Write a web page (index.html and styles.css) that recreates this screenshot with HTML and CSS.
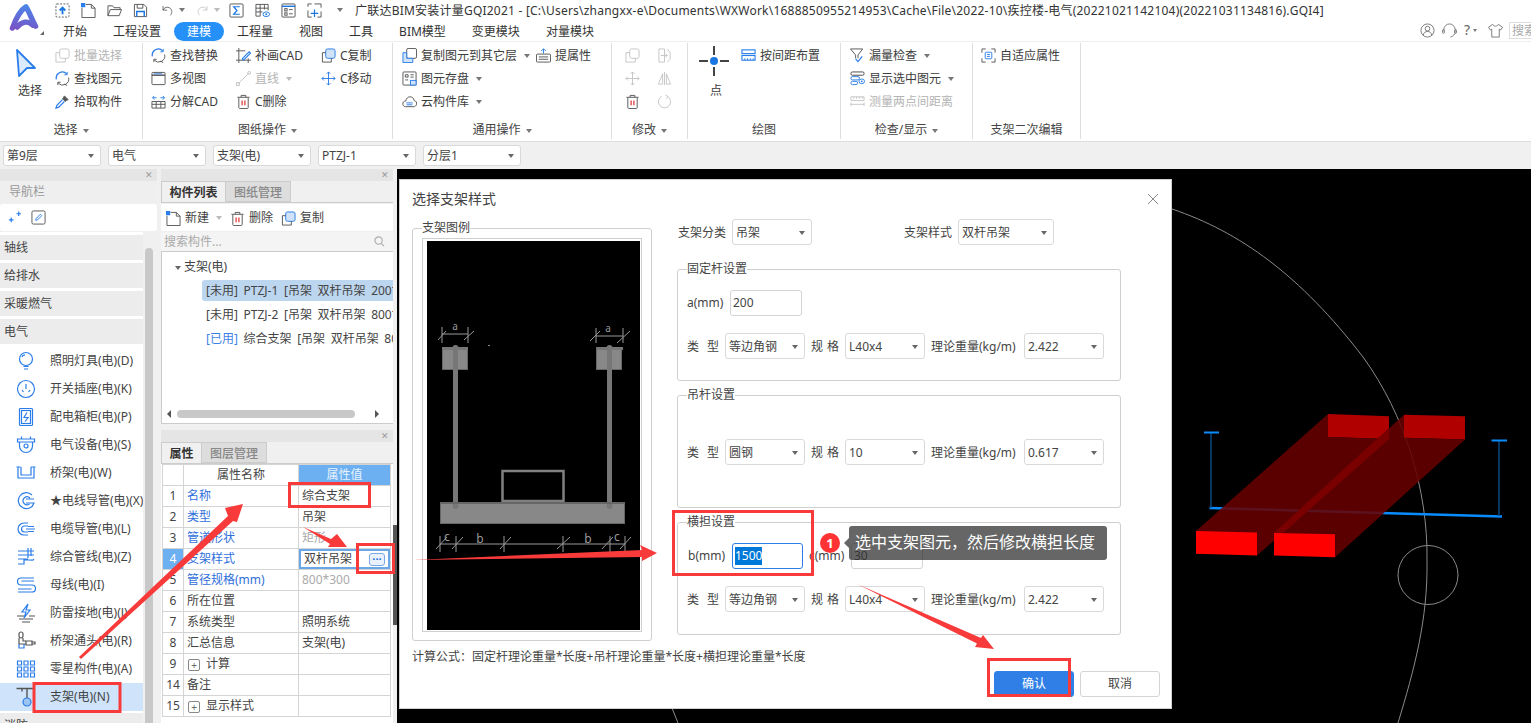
FILE: index.html
```html
<!DOCTYPE html>
<html lang="zh-CN">
<head>
<meta charset="utf-8">
<title>广联达BIM安装计量GQI2021</title>
<link rel="stylesheet" href="styles.css">
</head>
<body>
<svg class="defs" aria-hidden="true">
<defs>
<linearGradient id="lg" gradientUnits="userSpaceOnUse" x1="18" y1="2" x2="12" y2="30"><stop offset="0" stop-color="#4a86e8"/><stop offset="1" stop-color="#7b4fc4"/></linearGradient>
<symbol id="upload" viewBox="0 0 16 16"><rect x="1" y="1" width="14" height="14" rx="1" stroke-dasharray="2 1.5"/><path d="M8 12V5M5 8l3-3 3 3" stroke="#1976e0" stroke-width="2"/></symbol>
<symbol id="newdoc" viewBox="0 0 16 16"><path d="M5 1.500h6l4 4V15.500H1V5"/><path d="M11 1.500v4h4"/><rect x="0" y="0" width="4.500" height="4.500" fill="#2b7de9" stroke="none"/></symbol>
<symbol id="folder" viewBox="0 0 16 16"><path d="M1 13.500V3h5l1.500 2H14v2M1 13.500h12L15.500 7H3.500z"/></symbol>
<symbol id="save" viewBox="0 0 16 16"><path d="M1.500 1.500h10l3 3v10h-13z"/><path d="M4.500 1.500v4h6v-4"/><path d="M4 14.500V9h8v5.500" stroke="#1976e0" stroke-width="1.500"/></symbol>
<symbol id="undo" viewBox="0 0 16 16"><path d="M2.500 2.500v5h5"/><path d="M2.500 7.500C4 4 8 3 11 5c3 2.500 3 6 .5 9"/></symbol>
<symbol id="redo" viewBox="0 0 16 16"><path d="M13.500 2.500v5h-5"/><path d="M13.500 7.500C12 4 8 3 5 5c-3 2.500-3 6-.5 9"/></symbol>
<symbol id="sigma" viewBox="0 0 16 16"><rect x="1" y="1" width="14" height="14" rx="1"/><path d="M11.500 4H5l3.500 4L5 12h6.500" stroke="#1976e0" stroke-width="1.300"/></symbol>
<symbol id="gridEye" viewBox="0 0 16 16"><path d="M1 14V1.500h13V8M1 5.500h13M1 9.500h7M5.500 1.500V14H1M10 1.500V7"/><ellipse cx="12" cy="12" rx="3.500" ry="2.500" stroke="#1976e0"/><circle cx="12" cy="12" r="1" fill="#1976e0" stroke="none"/></symbol>
<symbol id="listp" viewBox="0 0 16 16"><rect x="1" y="1" width="14" height="14" rx="1"/><path d="M1 3.500h14" stroke="#1976e0" stroke-width="1.500"/><rect x="4" y="6" width="2.500" height="2.500"/><rect x="4" y="10.500" width="2.500" height="2.500"/><path d="M8.500 7h4M8.500 11.500h4"/></symbol>
<symbol id="dashPlus" viewBox="0 0 16 16"><path d="M1 4V1h4M8 1h7v4M15 9v6h-4M5 15H1V8"/><path d="M8 7v8M4 11h8" stroke="#1976e0" stroke-width="1.300"/></symbol>
<symbol id="cursor" viewBox="0 0 22 30"><path d="M2 2l18 18-8 0 -8 8z" fill="#dcebfb" stroke="#2b7de9" stroke-width="1.800" stroke-linejoin="round"/></symbol>
<symbol id="copyGray" viewBox="0 0 16 16"><rect x="5" y="1" width="10" height="10" rx="2"/><path d="M5 5H1v10h10v-4"/></symbol>
<symbol id="cycle" viewBox="0 0 16 16"><path d="M1.500 9a6.500 6.500 0 0 1 11-6" stroke="#2b7de9" stroke-width="1.300"/><path d="M14.500 7a6.500 6.500 0 0 1-11 6"/><path d="M13 1v3h-3" stroke="#2b7de9"/><path d="M3 15v-3h3M10 14l3 1.500"/></symbol>
<symbol id="dropper" viewBox="0 0 16 16"><path d="M10 2l4 4-2 1-1 1-3-3 1-1z" fill="#555"/><path d="M8 6L2 12l-1 3 3-1 6-6" stroke="#2b7de9" stroke-width="1.300"/></symbol>
<symbol id="windows" viewBox="0 0 16 16"><rect x="1" y="1.500" width="14" height="13" rx="1"/><path d="M1 4.500h14" stroke-width="1.500"/><path d="M3 3h9" stroke="#2b7de9"/></symbol>
<symbol id="explode" viewBox="0 0 16 16"><path d="M1 8v7h14V8zM5.500 8v7M10.500 8v7M1 11h14"/><path d="M2 4h4M10 4h4M3.500 2L1.500 4l2 2M12.500 2l2 2-2 2" stroke="#2b7de9"/></symbol>
<symbol id="cadDraw" viewBox="0 0 16 16"><path d="M3 0v16M13 11v5M0 3h10M0 13h16"/><path d="M7 11l7-7 1.500 1.500-7 7H7z" stroke="#2b7de9" stroke-width="1.200"/></symbol>
<symbol id="slash" viewBox="0 0 16 16"><path d="M2 14L14 2"/><rect x="0.500" y="12.500" width="3" height="3"/><circle cx="14" cy="2" r="1.500"/></symbol>
<symbol id="trash" viewBox="0 0 16 16"><path d="M3 4v10.500c0 .5.500 1 1 1h8c.5 0 1-.5 1-1V4M1.500 3.500h13M5.500 3.500v-2h5v2"/><path d="M6.500 7v5M9.500 7v5" stroke="#e02020" stroke-width="1.200"/></symbol>
<symbol id="copyBlue" viewBox="0 0 16 16"><rect x="5" y="1" width="10" height="10" rx="2" fill="#cfe2f8" stroke="#2b7de9"/><path d="M5 5H1.500v10h9.500v-4"/></symbol>
<symbol id="move" viewBox="0 0 16 16" ><path d="M8 1v14M1 8h14M6 3l2-2 2 2M6 13l2 2 2-2M3 6L1 8l2 2M13 6l2 2-2 2" stroke="#2b7de9"/></symbol>
<symbol id="moveGray" viewBox="0 0 16 16"><path d="M8 1v14M1 8h14M6 3l2-2 2 2M6 13l2 2 2-2M3 6L1 8l2 2M13 6l2 2-2 2"/></symbol>
<symbol id="copyLayer" viewBox="0 0 16 16"><rect x="5" y="0.500" width="10.500" height="10.500" rx="1.500"/><path d="M5 5H1v10.500h10.500V11H5z" fill="#cfe2f8" stroke="#2b7de9"/></symbol>
<symbol id="store" viewBox="0 0 16 16"><rect x="1" y="1" width="14" height="14" rx="1"/><path d="M3.500 4h3v2.500h-3zM3.500 9.500h3M9 4h3.500M9 6.500h3.500"/><rect x="9" y="10" width="6" height="5" fill="#cfe2f8" stroke="#2b7de9"/></symbol>
<symbol id="cloud" viewBox="0 0 16 16"><path d="M4 13.500C1.500 13.500 0.500 11.500 1 9.500 1.500 8 2.500 7.500 4 7.500 4.500 4.500 6.500 3 8.500 3c2.500 0 4 1.500 4.500 4 2 .5 3 2 2.500 4-.3 1.500-1.500 2.500-3 2.500z"/><path d="M4.500 9.500h7M5 11.500h6" stroke="#2b7de9"/></symbol>
<symbol id="extract" viewBox="0 0 16 16"><rect x="0.500" y="6.500" width="15" height="8.500" rx="1"/><path d="M3 9.500h10M3 12h10"/><path d="M8 6V1M5.500 3L8 1l2.500 2" stroke="#2b7de9"/></symbol>
<symbol id="mirrorDoc" viewBox="0 0 16 16"><path d="M2 1h6v14H2zM11 1l3 4v7l-3 3"/><path d="M4 8h7M9 6l2 2-2 2"/></symbol>
<symbol id="mirror" viewBox="0 0 16 16"><path d="M8 1v14M6 3L1.500 14H6zM10 3l4.500 11H10z"/></symbol>
<symbol id="rotate" viewBox="0 0 16 16"><path d="M11 2.500a6.500 6.500 0 1 1-6 0"/><path d="M9 1l2.500 1.500L10 5"/></symbol>
<symbol id="point" viewBox="0 0 30 30"><path d="M15 0v9M15 21v9M0 15h9M21 15h9" stroke="#444" stroke-width="2"/><circle cx="15" cy="15" r="4" fill="#1976e0" stroke="none"/></symbol>
<symbol id="spacing" viewBox="0 0 16 16"><rect x="1" y="2" width="14" height="4" stroke="#2b7de9" stroke-width="1.200"/><rect x="1" y="8" width="14" height="5" stroke="#2b7de9" stroke-width="1.200"/><path d="M4 11v2M7 11v2M10 11v2M13 11v2" stroke="#2b7de9"/></symbol>
<symbol id="filter" viewBox="0 0 16 16"><path d="M0.500 1h13L8.500 7.500V11M6 11V7.500L.5 1"/><path d="M6 11.500l2.500 3L13 9" stroke="#2b7de9" stroke-width="1.300"/></symbol>
<symbol id="showSel" viewBox="0 0 16 16"><rect x="1" y="1" width="14" height="3.500" rx="1.500" stroke="#444"/><rect x="1" y="6" width="9" height="3.500" rx="1.500" stroke="#2b7de9"/><rect x="1" y="11" width="7" height="3.500" rx="1.500" stroke="#2b7de9"/><ellipse cx="12.500" cy="11" rx="3" ry="2.500" stroke="#2b7de9"/><circle cx="12.500" cy="11" r="1" fill="#2b7de9" stroke="none"/></symbol>
<symbol id="measure" viewBox="0 0 16 16"><path d="M1 3h14v4H1zM1 11h14M1 9v4M15 9v4M4 3v2M7 3v2M10 3v2M13 3v2"/></symbol>
<symbol id="adapt" viewBox="0 0 16 16"><path d="M1 5V1h4M11 1h4v4M15 11v4h-4M5 15H1v-4"/><rect x="4.500" y="4.500" width="7" height="7" rx="1" stroke="#2b7de9"/><path d="M6.500 7h3M6.500 9h3" stroke="#2b7de9"/></symbol>
<symbol id="user" viewBox="0 0 16 16"><circle cx="8" cy="8" r="7"/><circle cx="8" cy="6" r="2.500"/><path d="M3.500 13c.5-3 2.500-4 4.500-4s4 1 4.500 4"/></symbol>
<symbol id="headset" viewBox="0 0 16 16"><path d="M2 9V7a6 6 0 0 1 12 0v2c0 3-2 5.500-5 6"/><rect x="0.500" y="7" width="2" height="4" rx="1"/><rect x="13.500" y="7" width="2" height="4" rx="1"/></symbol>
<symbol id="shirt" viewBox="0 0 16 16"><path d="M5 1.500L0.500 4.500 2.500 7.500 4 6.500V15h8V6.500l1.500 1 2-3L11 1.500C10 4 6 4 5 1.500z"/></symbol>
<symbol id="sparks" viewBox="0 0 16 16"><path d="M2 10.500h5M4.500 8v5M10 4h5M12.500 1.500v5" stroke="#2b7de9" stroke-width="1.300"/></symbol>
<symbol id="pencilBox" viewBox="0 0 16 16"><rect x="1" y="1" width="14" height="14" rx="1.500"/><path d="M5 11l.5-2L10 4.500l1.500 1.500L7 10.500z" stroke="#2b7de9"/></symbol>
<symbol id="mag" viewBox="0 0 12 12"><circle cx="5" cy="5" r="4"/><path d="M8 8l3 3"/></symbol>
<symbol id="bulb" viewBox="0 0 20 20"><circle cx="10" cy="8" r="6.500"/><path d="M7.500 15.500h5M8 18h4M6 6c.5-1.500 1.500-2 3-2.200"/></symbol>
<symbol id="socket" viewBox="0 0 20 20"><circle cx="10" cy="10" r="8.500"/><path d="M10 5v5M6 11l1.500 2M14 11l-1.500 2"/></symbol>
<symbol id="cabinet" viewBox="0 0 20 20"><rect x="3.500" y="1.500" width="13" height="17" rx="1"/><rect x="5.500" y="3.500" width="9" height="13"/><path d="M11 5.500L8 10.500h4L9 14.500"/></symbol>
<symbol id="device" viewBox="0 0 20 20"><path d="M1.500 4h17v3h-17zM3.500 7v4a6.500 6.500 0 0 0 13 0V7M5.500 4V1.500M14.500 4V1.500"/><circle cx="10" cy="11" r="2"/></symbol>
<symbol id="tray" viewBox="0 0 20 20"><path d="M2 4v11h16V4M5 4v8h10V4"/><path d="M0.500 4h4M15 4h4.500"/></symbol>
<symbol id="conduit" viewBox="0 0 20 20"><path d="M16 4a8 8 0 1 0 2 8H10"/><path d="M14 7a4 4 0 1 0-.5 6M10 8h8"/></symbol>
<symbol id="cable" viewBox="0 0 20 20"><path d="M12 4H8a6 6 0 0 0 0 12h4"/><path d="M12 7H8.500a3 3 0 0 0 0 6H12"/><path d="M10 10h9M12 7.500h6M12 12.500h6"/></symbol>
<symbol id="combo" viewBox="0 0 20 20"><path d="M2 4h16M2 8h16M12 1v10M15 1v8M2 12h10M2 17h6v-4h6c2 0 3 1 4-1"/></symbol>
<symbol id="busbar" viewBox="0 0 20 20"><path d="M18 3H5a3 3 0 0 0 0 7h11a3 3 0 0 1 0 7H2"/><path d="M18 6H5.500M2 14h13.500"/></symbol>
<symbol id="bolt" viewBox="0 0 20 20"><path d="M12 1L6 9h4l-2 6 6-8h-4z"/><path d="M1 13h7M13 13h6" stroke="#555"/><path d="M3 16h14M6 19h8" stroke="#555"/></symbol>
<symbol id="fitting" viewBox="0 0 20 20"><rect x="3" y="1" width="4" height="6" rx="2" stroke="#555"/><path d="M3 7v6h7M7 7v3h3" stroke="#555"/><path d="M10 10h6v4h-6zM16 11h3v2h-3z" stroke="#555"/><path d="M3 13v4h5v-4" stroke="#2b7de9"/></symbol>
<symbol id="dots9" viewBox="0 0 20 20"><path d="M1.500 2h4v4h-4zM8 2h4v4H8zM14.500 2h4v4h-4zM1.500 8h4v4h-4zM8 8h4v4H8zM14.500 8h4v4h-4zM1.500 14h4v4h-4zM8 14h4v4H8zM14.500 14h4v4h-4z"/></symbol>
<symbol id="bracket" viewBox="0 0 20 20"><path d="M0.500 1.500h18M6 1.500v3M11 2v10" stroke="#555" stroke-width="1.400"/><circle cx="11" cy="15" r="4" fill="#9cc4f2" stroke="#2b7de9"/></symbol>
</defs>
</svg>

<div class="app">
  <header class="top">
    <div class="logo-cell">
      <svg class="logo" viewBox="0 0 32 30"><path d="M4 26C8 15 13 7 18 4c3 4 6 13 10 20M9 25c5-6 11-7 16-2" fill="none" stroke="url(#lg)" stroke-width="5.500" stroke-linecap="round" stroke-linejoin="round"/></svg>
      <i class="corner"></i>
    </div>
    <div class="top-main">
      <div class="title-row">
        <svg class="i qa"><use href="#upload"/></svg>
        <svg class="i qa"><use href="#newdoc"/></svg>
        <svg class="i qa"><use href="#folder"/></svg>
        <svg class="i qa"><use href="#save"/></svg>
        <svg class="i qa-s"><use href="#undo"/></svg><i class="caret qa-c"></i>
        <svg class="i qa-s off"><use href="#redo"/></svg><i class="caret qa-c lt"></i>
        <svg class="i qa"><use href="#sigma"/></svg>
        <svg class="i qa"><use href="#gridEye"/></svg>
        <svg class="i qa"><use href="#listp"/></svg>
        <svg class="i qa"><use href="#dashPlus"/></svg>
        <i class="caret qa-last"></i>
        <span class="win-title">广联达BIM安装计量GQI2021 - [C:\Users\zhangxx-e\Documents\WXWork\1688850955214953\Cache\File\2022-10\疾控楼-电气(20221021142104)(20221031134816).GQI4]</span>
      </div>
      <div class="tab-row">
        <nav class="tabs">
          <span class="tab">开始</span><span class="tab">工程设置</span><span class="tab on">建模</span><span class="tab">工程量</span><span class="tab">视图</span><span class="tab">工具</span><span class="tab">BIM模型</span><span class="tab">变更模块</span><span class="tab">对量模块</span>
        </nav>
        <div class="sys">
          <svg class="i sys-i"><use href="#user"/></svg>
          <svg class="i sys-i"><use href="#headset"/></svg>
          <span class="help">?</span><i class="caret mini"></i>
          <svg class="i sys-i"><use href="#shirt"/></svg>
          <span class="search-mini">搜索</span>
        </div>
      </div>
    </div>
  </header>

  <section class="ribbon">
    <div class="group g1">
      <div class="g-body">
        <div class="big"><svg class="i cursor"><use href="#cursor"/></svg><span>选择</span></div>
        <div class="col">
          <div class="it dis"><svg class="i off"><use href="#copyGray"/></svg>批量选择</div>
          <div class="it"><svg class="i"><use href="#cycle"/></svg>查找图元</div>
          <div class="it"><svg class="i"><use href="#dropper"/></svg>拾取构件</div>
        </div>
      </div>
      <div class="g-label">选择<i class="caret"></i></div>
    </div>
    <div class="group g2">
      <div class="g-body">
        <div class="col w85">
          <div class="it"><svg class="i"><use href="#cycle"/></svg>查找替换</div>
          <div class="it"><svg class="i"><use href="#windows"/></svg>多视图</div>
          <div class="it"><svg class="i"><use href="#explode"/></svg>分解CAD</div>
        </div>
        <div class="col w85">
          <div class="it"><svg class="i"><use href="#cadDraw"/></svg>补画CAD</div>
          <div class="it dis"><svg class="i off"><use href="#slash"/></svg>直线<i class="caret lt"></i></div>
          <div class="it"><svg class="i"><use href="#trash"/></svg>C删除</div>
        </div>
        <div class="col">
          <div class="it"><svg class="i"><use href="#copyBlue"/></svg>C复制</div>
          <div class="it"><svg class="i"><use href="#move"/></svg>C移动</div>
        </div>
      </div>
      <div class="g-label">图纸操作<i class="caret"></i></div>
    </div>
    <div class="group g3">
      <div class="g-body">
        <div class="col w134">
          <div class="it"><svg class="i"><use href="#copyLayer"/></svg>复制图元到其它层<i class="caret"></i></div>
          <div class="it"><svg class="i"><use href="#store"/></svg>图元存盘<i class="caret"></i></div>
          <div class="it"><svg class="i"><use href="#cloud"/></svg>云构件库<i class="caret"></i></div>
        </div>
        <div class="col">
          <div class="it"><svg class="i"><use href="#extract"/></svg>提属性</div>
        </div>
      </div>
      <div class="g-label">通用操作<i class="caret"></i></div>
    </div>
    <div class="group g4">
      <div class="g-body">
        <div class="col w32">
          <div class="it"><svg class="i off"><use href="#copyGray"/></svg></div>
          <div class="it"><svg class="i off"><use href="#moveGray"/></svg></div>
          <div class="it"><svg class="i"><use href="#trash"/></svg></div>
        </div>
        <div class="col">
          <div class="it"><svg class="i off"><use href="#mirrorDoc"/></svg></div>
          <div class="it"><svg class="i off"><use href="#mirror"/></svg></div>
          <div class="it"><svg class="i off"><use href="#rotate"/></svg></div>
        </div>
      </div>
      <div class="g-label">修改<i class="caret"></i></div>
    </div>
    <div class="group g5">
      <div class="g-body">
        <div class="big pt"><svg class="i point"><use href="#point"/></svg><span>点</span></div>
        <div class="col">
          <div class="it"><svg class="i"><use href="#spacing"/></svg>按间距布置</div>
        </div>
      </div>
      <div class="g-label">绘图</div>
    </div>
    <div class="group g6">
      <div class="g-body">
        <div class="col">
          <div class="it"><svg class="i"><use href="#filter"/></svg>漏量检查<i class="caret"></i></div>
          <div class="it"><svg class="i"><use href="#showSel"/></svg>显示选中图元<i class="caret"></i></div>
          <div class="it dis"><svg class="i off"><use href="#measure"/></svg>测量两点间距离</div>
        </div>
      </div>
      <div class="g-label">检查/显示<i class="caret"></i></div>
    </div>
    <div class="group g7">
      <div class="g-body">
        <div class="col">
          <div class="it"><svg class="i"><use href="#adapt"/></svg>自适应属性</div>
        </div>
      </div>
      <div class="g-label">支架二次编辑</div>
    </div>
  </section>

  <section class="selbar">
    <div class="sel s98"><span>第9层</span><i class="caret"></i></div>
    <div class="sel s98"><span>电气</span><i class="caret"></i></div>
    <div class="sel s98"><span>支架(电)</span><i class="caret"></i></div>
    <div class="sel s98"><span>PTZJ-1</span><i class="caret"></i></div>
    <div class="sel s98"><span>分层1</span><i class="caret"></i></div>
  </section>

  <main class="work">
    <aside class="nav">
      <div class="pbar"><span class="x">✕</span></div>
      <div class="nav-title">导航栏</div>
      <div class="nav-tools">
        <svg class="i"><use href="#sparks"/></svg>
        <svg class="i"><use href="#pencilBox"/></svg>
      </div>
      <div class="nav-wrap">
        <div class="nav-list">
          <div class="cat">轴线</div>
          <div class="cat">给排水</div>
          <div class="cat">采暖燃气</div>
          <div class="cat">电气</div>
          <div class="ni"><svg class="nic"><use href="#bulb"/></svg>照明灯具(电)(D)</div>
          <div class="ni"><svg class="nic"><use href="#socket"/></svg>开关插座(电)(K)</div>
          <div class="ni"><svg class="nic"><use href="#cabinet"/></svg>配电箱柜(电)(P)</div>
          <div class="ni"><svg class="nic"><use href="#device"/></svg>电气设备(电)(S)</div>
          <div class="ni"><svg class="nic"><use href="#tray"/></svg>桥架(电)(W)</div>
          <div class="ni"><svg class="nic"><use href="#conduit"/></svg>★电线导管(电)(X)</div>
          <div class="ni"><svg class="nic"><use href="#cable"/></svg>电缆导管(电)(L)</div>
          <div class="ni"><svg class="nic"><use href="#combo"/></svg>综合管线(电)(Z)</div>
          <div class="ni"><svg class="nic"><use href="#busbar"/></svg>母线(电)(I)</div>
          <div class="ni"><svg class="nic"><use href="#bolt"/></svg>防雷接地(电)(J)</div>
          <div class="ni"><svg class="nic"><use href="#fitting"/></svg>桥架通头(电)(R)</div>
          <div class="ni"><svg class="nic"><use href="#dots9"/></svg>零星构件(电)(A)</div>
          <div class="ni cur"><svg class="nic"><use href="#bracket"/></svg>支架(电)(N)</div>
          <div class="cat last">消防</div>
        </div>
        <div class="nav-track"><div class="nav-thumb"></div></div>
      </div>
    </aside>

    <section class="mid">
      <div class="pbar"><span class="x">✕</span></div>
      <div class="mtabs"><span class="mtab on">构件列表</span><span class="mtab">图纸管理</span></div>
      <div class="mtools">
        <svg class="i"><use href="#newdoc"/></svg><span>新建</span><i class="caret lt"></i>
        <svg class="i mt-g"><use href="#trash"/></svg><span>删除</span>
        <svg class="i mt-g"><use href="#copyBlue"/></svg><span>复制</span>
      </div>
      <div class="msearch"><span>搜索构件...</span><svg class="mag"><use href="#mag"/></svg></div>
      <div class="tree">
        <div class="tn"><i class="caret tc"></i>支架(电)</div>
        <div class="tl sel-row">[未用] PTZJ-1 [吊架 双杆吊架 200*100]</div>
        <div class="tl">[未用] PTZJ-2 [吊架 双杆吊架 800*300]</div>
        <div class="tl"><span class="used">[已用]</span> 综合支架 [吊架 双杆吊架 800*300]</div>
        <div class="hscroll"><i class="arr l"></i><div class="hthumb"></div><i class="arr r"></i></div>
      </div>
      <div class="pgap"></div>
      <div class="pbar"><span class="x">✕</span></div>
      <div class="mtabs"><span class="mtab on t2">属性</span><span class="mtab">图层管理</span></div>
      <div class="pwrap">
      <table class="props">
        <colgroup><col class="c1"><col class="c2"><col class="c3"></colgroup>
        <tr class="hd"><th></th><th>属性名称</th><th class="pv">属性值</th></tr>
        <tr><td class="n">1</td><td class="bl">名称</td><td>综合支架</td></tr>
        <tr><td class="n">2</td><td class="bl">类型</td><td>吊架</td></tr>
        <tr><td class="n">3</td><td class="bl">管道形状</td><td class="gy">矩形</td></tr>
        <tr><td class="n act">4</td><td class="bl">支架样式</td><td class="edit"><div class="edit-in"><span>双杆吊架</span><span class="more">···</span></div></td></tr>
        <tr><td class="n">5</td><td class="bl">管径规格(mm)</td><td class="gy">800*300</td></tr>
        <tr><td class="n">6</td><td>所在位置</td><td></td></tr>
        <tr><td class="n">7</td><td>系统类型</td><td>照明系统</td></tr>
        <tr><td class="n">8</td><td>汇总信息</td><td>支架(电)</td></tr>
        <tr><td class="n">9</td><td><span class="pm">+</span>计算</td><td></td></tr>
        <tr><td class="n">14</td><td>备注</td><td></td></tr>
        <tr><td class="n">15</td><td><span class="pm">+</span>显示样式</td><td></td></tr>
      </table>
      </div>
    </section>

    <div class="split"><div class="split-thumb"></div></div>

    <section class="canvas">
      <svg class="scene" viewBox="397 169 1134 554">
        <path class="arc" d="M1172 209C1240 232 1300 275 1363 357C1405 415 1428 490 1427 560C1428 620 1414 670 1398 723"/>
        <path class="arc" d="M672 708L678 723"/>
        <ellipse class="arc" cx="1428" cy="575" rx="30" ry="29.500"/>
        <path class="bb" d="M1209.500 508L1502 516.500"/>
        <path class="bv" d="M1211 433V508M1499 441V516"/>
        <path class="bc" d="M1204 432.500H1219M1491.500 440.500H1507"/>
        <polygon fill="#b00000" points="1328,414 1389,416.200 1389,439 1328,437"/>
        <polygon fill="#b00000" points="1404,414.800 1465,416.200 1465,439.500 1404,437.700"/>
        <polygon class="rb" points="1196,531 1328,414 1328,437 1389,439 1257,555.500"/>
        <polygon class="rb" points="1274,533 1404,414.800 1404,437.700 1465,439.500 1335,557.300"/>
        <polygon fill="#7a0000" points="1274,533 1389,428 1389,439 1274,541"/>
        <polygon fill="#ff0000" points="1196,531 1257,532.600 1257,555.500 1196,553.700"/>
        <polygon fill="#ff0000" points="1274,533 1335,534.300 1335,557.300 1274,555.500"/>
      </svg>
    </section>
  </main>

  <div class="dialog" role="dialog">
    <div class="d-head"><span>选择支架样式</span>
      <svg class="d-close" viewBox="0 0 12 12"><path d="M1 1l10 10M11 1L1 11"/></svg>
    </div>
    <div class="d-body">
      <fieldset class="fs legend-box">
        <legend>支架图例</legend>
        <div class="frame">
          <svg class="draw" viewBox="427 241 213 389">
            <rect x="427" y="241" width="213" height="389" fill="#000"/>
            <g fill="#888" stroke="#666">
              <rect x="442.500" y="347.500" width="25" height="22"/>
              <rect x="596.500" y="347.500" width="25" height="22"/>
              <rect x="440.500" y="502.500" width="184" height="21"/>
            </g>
            <g fill="#777">
              <rect x="453" y="346" width="5" height="160"/>
              <rect x="607" y="346" width="5" height="160"/>
              <circle cx="455.500" cy="348" r="3"/>
              <circle cx="609.500" cy="348" r="3"/>
              <rect x="442" y="347" width="26" height="3"/>
              <rect x="597" y="347" width="26" height="3"/>
              <circle cx="455.500" cy="506" r="3"/>
              <circle cx="609.500" cy="506" r="3"/>
            </g>
            <rect x="502.500" y="471" width="61" height="30" fill="none" stroke="#808080" stroke-width="2.500"/>
            <path d="M441 503H625" stroke="#666" stroke-width="2"/>
            <g stroke="#999" stroke-width="1" fill="none">
              <path d="M442 334H468M442 327V343M468 327V343M438 340L446 331M464 340L474 331"/>
              <path d="M596 336H623M596 328V343M623 328V343M590 341L600 331M617 343L630 331"/>
              <path d="M440 544H625M440 536V552M456 536V552M504 536V552M563 536V552M610 536V552M625 536V552"/>
              <path d="M436 549L447 537M452 549L463 537M500 549L511 537M557 549L570 537M602 549L613 537M620 549L631 537"/>
            </g>
            <g class="dim-t">
              <text x="455" y="330" text-anchor="middle">a</text>
              <text x="608" y="332" text-anchor="middle">a</text>
              <text x="447" y="541" class="big-d" text-anchor="middle">c</text>
              <text x="480" y="543" class="big-d" text-anchor="middle">b</text>
              <text x="588" y="543" class="big-d" text-anchor="middle">b</text>
              <text x="617" y="541" class="big-d" text-anchor="middle">c</text>
            </g>
            <rect x="488" y="345" width="2" height="1" fill="#888"/>
          </svg>
        </div>
      </fieldset>
      <div class="d-right">
        <div class="d-top">
          <span class="lb">支架分类</span>
          <div class="sel s80"><span>吊架</span><i class="caret"></i></div>
          <span class="lb lb-gap">支架样式</span>
          <div class="sel s96"><span>双杆吊架</span><i class="caret"></i></div>
        </div>
        <fieldset class="fs f1">
          <legend>固定杆设置</legend>
          <div class="frow r1"><span class="lb w36">a(mm)</span><div class="inp">200</div></div>
          <div class="frow r2">
            <span class="lb2"><span>类</span><span>型</span></span>
            <div class="sel s80"><span>等边角钢</span><i class="caret"></i></div>
            <span class="lb3"><span>规</span><span>格</span></span>
            <div class="sel s80"><span>L40x4</span><i class="caret"></i></div>
            <span class="lb w87">理论重量(kg/m)</span>
            <div class="sel s80"><span>2.422</span><i class="caret"></i></div>
          </div>
        </fieldset>
        <fieldset class="fs f2">
          <legend>吊杆设置</legend>
          <div class="frow r2 far">
            <span class="lb2"><span>类</span><span>型</span></span>
            <div class="sel s80"><span>圆钢</span><i class="caret"></i></div>
            <span class="lb3"><span>规</span><span>格</span></span>
            <div class="sel s80"><span>10</span><i class="caret"></i></div>
            <span class="lb w87">理论重量(kg/m)</span>
            <div class="sel s80"><span>0.617</span><i class="caret"></i></div>
          </div>
        </fieldset>
        <fieldset class="fs f2">
          <legend>横担设置</legend>
          <div class="frow r1">
            <span class="lb w36 b-lb">b(mm)</span><div class="inp focus"><span class="hl">1500</span></div>
            <span class="lb w36c">c(mm)</span><div class="inp">30</div>
          </div>
          <div class="frow r2">
            <span class="lb2"><span>类</span><span>型</span></span>
            <div class="sel s80"><span>等边角钢</span><i class="caret"></i></div>
            <span class="lb3"><span>规</span><span>格</span></span>
            <div class="sel s80"><span>L40x4</span><i class="caret"></i></div>
            <span class="lb w87">理论重量(kg/m)</span>
            <div class="sel s80"><span>2.422</span><i class="caret"></i></div>
          </div>
        </fieldset>
      </div>
    </div>
    <div class="formula">计算公式：固定杆理论重量*长度+吊杆理论重量*长度+横担理论重量*长度</div>
    <div class="d-btns"><span class="btn pri">确认</span><span class="btn">取消</span></div>
  </div>

  <svg class="marks" viewBox="0 0 1531 723">
    <g class="box">
      <rect x="34" y="683.500" width="86" height="28"/>
      <rect x="289.500" y="483.500" width="80" height="23"/>
      <rect x="357.500" y="544.500" width="36" height="28"/>
      <rect x="673.500" y="511.500" width="139" height="63"/>
      <rect x="988.500" y="659.500" width="81" height="36"/>
    </g>
    <g fill="#f93a3a">
      <polygon points="79,657 228,516 225,508 243,504 237,522 233,521 81,659"/>
      <polygon points="303,527 331,539 337,534 347,547 328,547 330,544"/>
      <polygon points="413,560 642,550 640,545 657,553 642,561 642,557"/>
      <polygon points="857,584 981,638 983,635 994,649 975,647 977,643.500"/>
    </g>
  </svg>

  <div class="tip">
    <span class="tip-n">1</span>
    <span class="tip-b">选中支架图元，然后修改横担长度</span>
  </div>
</div>
</body>
</html>
```
FILE: styles.css
```css
* { box-sizing: border-box; }
html, body { margin: 0; padding: 0; }
body { overflow: hidden; font: 12px/16px "Noto Sans", "Noto Sans CJK SC", sans-serif; color: #3c3c3c; background: #f0f0f0; }
.defs { display: block; width: 0; height: 0; position: absolute; }
i { font-style: normal; }
.app { position: relative; width: 1531px; height: 723px; overflow: hidden; display: flex; flex-direction: column; }

.i { width: 15px; height: 15px; flex: none; fill: none; stroke: #555; stroke-width: 1; }
.off { stroke: #c4c4c4; }
.caret { display: inline-block; width: 0; height: 0; border: 3px solid transparent; border-top: 4px solid #777; border-bottom: 0; margin-left: 6px; flex: none; vertical-align: middle; }
.caret.lt { border-top-color: #bbb; }

/* header */
.top { height: 41px; background: #fff; display: flex; flex: none; }
.logo-cell { width: 50px; display: flex; align-items: flex-start; padding: 3px 0 0 8px; flex: none; }
.logo { width: 32px; height: 29px; }
.corner { width: 0; height: 0; border-left: 4px solid transparent; border-bottom: 4px solid #666; margin-top: 28px; }
.top-main { flex: 1; min-width: 0; }
.title-row { height: 22px; display: flex; align-items: center; padding-left: 5px; white-space: nowrap; }
.qa { margin: 0 11px 2px 0; }
.qa-s { width: 13px; height: 13px; margin: 0 0 2px 2px; }
.qa-c { margin: 0 9px 2px 5px; }
.qa-last { margin: 0 12px 2px 4px; }
.win-title { font-size: 12px; color: #333; letter-spacing: .22px; }
.tab-row { height: 19px; display: flex; justify-content: space-between; }
.tabs { display: flex; }
.tab { padding: 0 13px; line-height: 19px; font-size: 12px; color: #333; border-radius: 10px; white-space: nowrap; }
.tab.on { background: #2490f8; color: #fff; }
.sys { display: flex; align-items: center; gap: 7px; padding-bottom: 3px; }
.sys-i { stroke: #777; }
.help { font-size: 14px; color: #666; }
.caret.mini { margin: 0 4px 0 -4px; border-width: 2px; border-top: 3px solid #777; border-bottom: 0; }
.search-mini { width: 22px; height: 17px; border: 1px solid #ddd; border-right: 0; color: #aaa; font-size: 12px; line-height: 15px; padding-left: 2px; overflow: hidden; white-space: nowrap; margin-left: -1px; }

/* ribbon */
.ribbon { height: 101px; background: #fff; border-top: 1px solid #eee; border-bottom: 1px solid #ddd; display: flex; flex: none; }
.group { height: 96px; margin-top: 1px; border-right: 1px solid #ddd; display: flex; flex-direction: column; flex: none; }
.g-body { height: 77px; display: flex; padding-top: 1px; }
.g-label { height: 19px; line-height: 20px; text-align: center; color: #444; white-space: nowrap; }
.g-label .caret { margin-left: 5px; }
.g1 { width: 143px; } .g1 .g-body { padding-left: 12px; gap: 7px; }
.g2 { width: 250px; } .g2 .g-body { padding-left: 8px; }
.g3 { width: 219px; } .g3 .g-body { padding-left: 9px; }
.g4 { width: 76px; }  .g4 .g-body { padding-left: 13px; }
.g5 { width: 153px; } .g5 .g-body { padding-left: 11px; gap: 12px; }
.g6 { width: 132px; } .g6 .g-body { padding-left: 9px; }
.g7 { width: 108px; } .g7 .g-body { padding-left: 8px; }
.col { display: flex; flex-direction: column; }
.w85 { width: 85px; } .w134 { width: 134px; } .w32 { width: 32px; }
.it { height: 23px; display: flex; align-items: center; gap: 4px; white-space: nowrap; color: #3c3c3c; }
.it.dis { color: #b4b4b4; }
.it .caret { margin-left: 3px; }
.big { width: 36px; display: flex; flex-direction: column; align-items: center; }
.cursor { width: 22px; height: 30px; margin: 4px 9px 5px 0; }
.big span { line-height: 16px; }
.big.pt { width: 30px; }
.big.pt span { padding-left: 4px; }
.point { width: 30px; height: 30px; margin-top: 2px; margin-bottom: 7px; stroke: none; }

/* selector bar */
.selbar { height: 27px; display: flex; align-items: center; gap: 7px; padding-left: 3px; flex: none; }
.sel { height: 21px; background: #fff; border: 1px solid #d9d9d9; border-radius: 3px; display: flex; align-items: center; justify-content: space-between; padding: 0 6px 0 3px; color: #444; white-space: nowrap; flex: none; }
.sel .caret { margin-left: 0; border-top-color: #666; }
.s98 { width: 98px; }
.s80 { width: 80px; height: 26px; }
.s96 { width: 96px; height: 26px; }

/* work */
.work { flex: 1; min-height: 0; display: flex; }
.pbar { height: 12px; background: #e5e5e5; display: flex; justify-content: flex-end; align-items: center; padding-right: 4px; flex: none; }
.x { font-size: 9px; color: #999; line-height: 12px; }

.nav { width: 157px; display: flex; flex-direction: column; flex: none; }
.nav-title { height: 22px; background: #efefef; color: #999; line-height: 22px; padding-left: 9px; }
.nav-tools { height: 27px; background: #fff; margin-top: 1px; display: flex; align-items: center; gap: 9px; padding-left: 7px; border-radius: 3px; }
.nav-wrap { flex: 1; min-height: 0; margin-top: 1px; display: flex; background: #fff; }
.nav-list { width: 143px; padding-top: 3px; overflow: hidden; flex: none; }
.cat { height: 25px; line-height: 25px; margin-bottom: 3px; background: #ececec; padding-left: 4px; color: #444; }
.cat.last { margin: 2px 0 0; }
.ni { height: 28px; display: flex; align-items: center; gap: 14px; padding-left: 16px; white-space: nowrap; overflow: hidden; color: #444; }
.nic { width: 20px; height: 20px; flex: none; fill: none; stroke: #2b7de9; stroke-width: 1.200; }
.ni.cur { background: #cfe4fb; }
.nav-track { width: 14px; background: #f0f0f0; padding: 16px 4px 0 2px; display: flex; flex: none; }
.nav-thumb { flex: 1; background: #c8c8c8; border-radius: 4px 4px 0 0; }

.mid { width: 232px; margin-left: 4px; display: flex; flex-direction: column; flex: none; }
.mtabs { height: 22px; display: flex; background: #f0f0f0; border-bottom: 1px solid #ccc; flex: none; }
.mtab { width: 65px; text-align: center; line-height: 22px; background: #ddd; color: #888; border: 1px solid #ccc; border-left: 0; font-weight: 500; font-size: 12px; }
.mtab.on { background: #f0f0f0; color: #333; font-weight: 700; border-left: 1px solid #ccc; border-bottom: 0; }
.mtab.t2 { width: 41px; }
.mtools { height: 27px; background: #fff; display: flex; align-items: center; padding: 1px 0 0 5px; gap: 4px; margin-top: 1px; color: #444; flex: none; }
.mt-g { margin-left: 4px; }
.mtools .caret { margin-left: 3px; }
.msearch { height: 20px; background: #f4f4f4; border-top: 1px solid #eee; display: flex; justify-content: space-between; align-items: center; padding: 0 8px 0 3px; color: #aaa; flex: none; }
.mag { width: 11px; height: 11px; fill: none; stroke: #aaa; stroke-width: 1.200; }
.tree { height: 173px; background: #fff; border: 1px solid #ccc; border-width: 1px 0 1px 1px; overflow: hidden; padding-top: 3px; flex: none; display: flex; flex-direction: column; }
.tn { height: 24px; line-height: 24px; padding-left: 13px; color: #444; white-space: nowrap; flex: none; }
.tc { margin: 0 3px 0 0; border-top-color: #666; }
.tl { height: 24px; line-height: 24px; margin-left: 40px; padding-left: 4px; white-space: nowrap; color: #444; width: 300px; word-spacing: 2.500px; flex: none; }
.sel-row { height: 21px; line-height: 21px; margin: 1px 0 2px 40px; background: #bdd6ef; border-radius: 3px 0 0 3px; }
.used { color: #3c82e6; }
.hscroll { margin-top: auto; height: 13px; margin-bottom: 3px; display: flex; align-items: center; padding: 0 2px 0 5px; flex: none; }
.hthumb { width: 178px; height: 8px; background: #c8c8c8; border-radius: 4px; margin: 0 20px 0 6px; }
.arr { width: 0; height: 0; border: 4px solid transparent; }
.arr.l { border-right: 4px solid #555; border-left: 0; }
.arr.r { border-left: 4px solid #555; border-right: 0; }
.pgap { height: 6px; flex: none; }
.pwrap { flex: 1; background: #fff; padding-left: 1px; min-height: 0; }
.props { width: 228px; border-collapse: collapse; table-layout: fixed; background: #fff; }
.c1 { width: 21px; } .c2 { width: 115px; } .c3 { width: 92px; }
.props th, .props td { height: 21px; padding: 0 0 0 3px; border: 1px solid #d4d4d4; font-weight: 400; color: #444; white-space: nowrap; overflow: hidden; }
.props th { text-align: center; padding: 0; }
.props th.pv { background: #6cb0f2; color: #e8f2fb; }
.props td.n { text-align: center; padding: 0; }
.props td.act { background: #6cb0f2; color: #fff; }
.props td.bl { color: #2f6fdc; }
.props td.gy { color: #aaa; }
.props td.edit { padding: 0; }
.edit-in { height: 20px; border: 2px solid #6ba6e6; display: flex; align-items: center; justify-content: space-between; padding: 0 3px 0 3px; }
.more { width: 16px; height: 13px; line-height: 10px; border: 1px solid #7aa9e6; border-radius: 3px; background: #e8f1fc; color: #2b6fdc; text-align: center; font-weight: 700; font-size: 11px; overflow: hidden; }
.pm { display: inline-block; width: 12px; height: 12px; line-height: 10px; border: 1px solid #888; border-radius: 2px; text-align: center; margin: 0 6px 0 1px; color: #666; font-size: 10px; vertical-align: -1px; }

.split { width: 4px; background: #f0f0f0; padding-top: 356px; flex: none; }
.split-thumb { height: 100px; background: #555; }
.canvas { flex: 1; min-width: 0; background: #000; }
.scene { display: block; width: 1134px; height: 554px; }
.arc { fill: none; stroke: #8a8a8a; stroke-width: 1; }
.bb { stroke: #0a8cff; stroke-width: 2.500; }
.bv { stroke: #0a4a80; stroke-width: 1.500; }
.bc { stroke: #0a8cff; stroke-width: 2; }
.rb { fill: #680000; fill-opacity: .88; }

/* dialog */
.dialog { position: absolute; left: 399px; top: 179px; width: 773px; height: 530px; background: #fff; border: 1px solid #d0d0d0; }
.d-head { height: 38px; display: flex; align-items: center; justify-content: space-between; padding: 0 12px; font-size: 14px; color: #444; }
.d-close { width: 12px; height: 12px; fill: none; stroke: #888; stroke-width: 1; }
.d-body { display: flex; padding-left: 12px; }
.fs { margin: 0; border: 1px solid #cfcfcf; border-radius: 3px; padding: 0 9px; min-width: 0; }
.fs legend { padding: 0; line-height: 14px; height: 14px; color: #444; background: #fff; }
.legend-box { width: 240px; height: 420px; margin-top: 3px; flex: none; }
.frame { width: 220px; height: 394px; border: 1px solid #cfcfcf; padding: 2px 1px 1px 4px; margin-top: 3px; }
.draw { display: block; width: 213px; height: 389px; }
.dim-t { font: 10px "Noto Sans", sans-serif; fill: #999; }
.dim-t .big-d { font-size: 12px; }
.d-right { width: 444px; margin-left: 25px; flex: none; }
.d-top { display: flex; align-items: center; gap: 6px; margin-top: 1px; height: 26px; padding: 0 0 0 1px; }
.d-top .lb, .d-top .sel { padding-top: 1px; }
.lb { white-space: nowrap; color: #444; flex: none; }
.lb-gap { margin-left: 86px; }
.f1 { height: 119px; margin-top: 17px; }
.f2 { height: 120px; margin-top: 7px; }
.frow { display: flex; align-items: center; height: 26px; gap: 6px; }
.r1 { margin-top: 14px; }
.r2 { margin-top: 17px; }
.r2.far { margin-top: 37px; }
.r2 .lb, .r2 .lb2, .r2 .lb3, .r2 .sel { padding-top: 2px; }
.w36 { width: 37px; }
.w36c { width: 36px; }
.w87 { width: 87px; }
.b-lb { margin-left: 1px; margin-right: 1px; }
.lb2, .lb3 { display: flex; justify-content: space-between; flex: none; color: #444; width: 32px; }
.lb3 { width: 28px; }
.inp { width: 72px; height: 26px; border: 1px solid #d4d4d4; border-radius: 3px; line-height: 24px; padding-left: 2px; color: #444; }
.inp.focus { width: 71px; border-color: #2b7de9; }
.hl { background: #0078d7; color: #fff; display: inline-block; line-height: 18px; }
.formula { margin: 8px 0 0 12px; line-height: 16px; color: #444; }
.d-btns { display: flex; justify-content: flex-end; gap: 6px; margin: 6px 11px 0 0; }
.btn { width: 80px; height: 26px; line-height: 24px; text-align: center; border: 1px solid #d4d4d4; border-radius: 3px; color: #444; }
.btn.pri { background: #2f7fe6; border-color: #2f7fe6; color: #fff; }

/* annotations */
.marks { position: absolute; left: 0; top: 0; width: 1531px; height: 723px; pointer-events: none; }
.box rect { fill: none; stroke: #f93a3a; stroke-width: 3; }
.tip { position: absolute; left: 820px; top: 526px; display: flex; align-items: center; gap: 9px; }
.tip-n { width: 20px; height: 20px; border-radius: 50%; background: #f33; color: #fff; text-align: center; line-height: 20px; font-size: 13px; font-weight: 700; margin-top: -1px; }
.tip-b { position: relative; width: 258px; height: 34px; background: rgba(51, 51, 51, .75); border-radius: 3px; color: #fff; font-size: 16px; line-height: 33px; padding-left: 6px; white-space: nowrap; }
.tip-b::before { content: ""; position: absolute; left: -5px; top: 12px; border: 5px solid transparent; border-left: 0; border-right-color: rgba(51, 51, 51, .75); }
```
